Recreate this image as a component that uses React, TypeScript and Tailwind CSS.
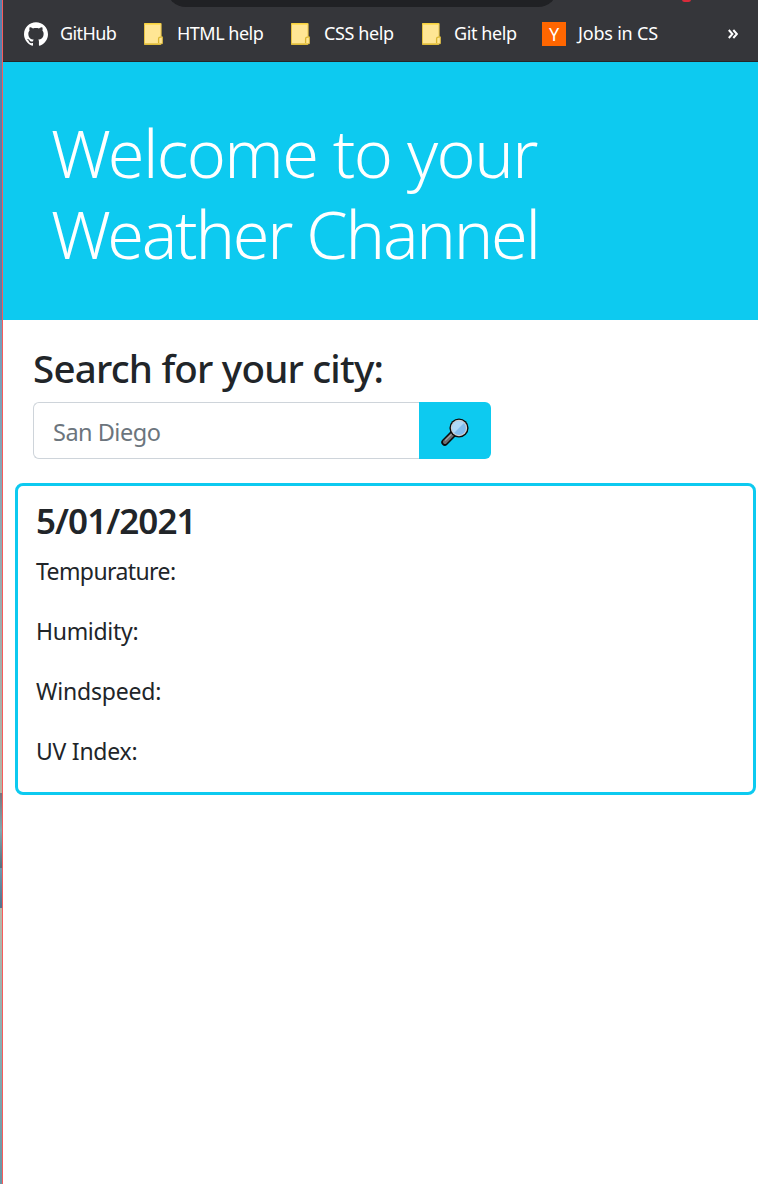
import type { ReactNode } from "react";
import { SiGithub } from "react-icons/si";

function NoteIcon() {
  return (
    <svg width="19" height="22" viewBox="0 0 19 22" className="block shrink-0">
      <path d="M.5.5h16.6v13.3h1.2v6.9h-1.6v.8H.5z" fill="#ffe694" stroke="#e5c241" />
      <path d="M.5 1h16" stroke="#ffd93f" strokeWidth="1.4" />
      <path d="M14.6 20v-4.2q0-1.7 1.8-1.7h1.2" fill="none" stroke="#d9b52f" strokeWidth="1.3" />
      <path d="M.5 20.9h16" stroke="#d9b52f" />
    </svg>
  );
}

function YIcon() {
  return (
    <div className="flex h-6 w-6 items-center justify-center bg-[#ff6600] text-[18px] leading-6 text-white">Y</div>
  );
}

function Magnifier() {
  return (
    <svg width="28" height="28" viewBox="0 0 28 28" className="block">
      <path d="M12.2 15.8 3.8 24.2" stroke="#0b0b0b" strokeWidth="7" strokeLinecap="round" />
      <path d="M11.8 16.2 4 24" stroke="#6c6c6e" strokeWidth="4" strokeLinecap="round" />
      <path d="M11.2 15.6 4.6 22.2" stroke="#a3a3a5" strokeWidth="1.2" strokeLinecap="round" />
      <circle cx="18" cy="10" r="9.6" fill="#0b0b0b" />
      <circle cx="18" cy="10" r="8.2" fill="#d0d0d2" />
      <circle cx="18" cy="10" r="7" fill="#83bdee" />
      <path d="M13.05 14.95A7 7 0 0 1 22.95 5.05z" fill="#afd9f8" />
    </svg>
  );
}

function Bookmark({ icon, label, className }: { icon: ReactNode; label: string; className: string }) {
  return (
    <a className={`flex shrink-0 items-center whitespace-nowrap ${className}`}>
      {icon}
      <span>{label}</span>
    </a>
  );
}

const readings = [
  { label: "Tempurature:", tracking: "tracking-[-0.6px]" },
  { label: "Humidity:", tracking: "tracking-[-0.3px]" },
  { label: "Windspeed:", tracking: "tracking-[-0.2px]" },
  { label: "UV Index:", tracking: "tracking-[-0.25px]" },
];

export default function App() {
  return (
    <div className="flex h-[1184px] w-[758px] overflow-hidden bg-white font-['Noto_Sans','Open_Sans',sans-serif] text-[#212529]">
      <div className="flex w-[2px] shrink-0 flex-col">
        <div className="h-[320px] bg-[#5681ab]" />
        <div className="h-[473px] bg-linear-to-b from-[#6f9fbe] to-[#b5b5a5]" />
        <div className="h-[75px] bg-linear-to-b from-[#77777f] via-[#7fa9b1] to-[#55707f]" />
        <div className="h-[40px] bg-linear-to-b from-[#6c9bb0] to-[#52738c]" />
        <div className="flex-1 bg-linear-to-b from-[#b8b8a8] via-[#84b0b5] to-[#6795a5]" />
      </div>
      <div className="w-px shrink-0 bg-[#f85b5b]" />
      <div className="min-w-0 flex-1">
        <nav className="relative flex h-[62px] items-center overflow-hidden border-b border-[#242629] bg-[#35363a] pt-[6px] text-[18px] text-white">
          <div className="absolute -top-[34px] left-[163px] h-[41px] w-[392px] rounded-[20px] bg-[#202124]" />
          <div className="absolute -top-[3px] left-[679px] h-[5px] w-[9px] rounded-full bg-[#d92b3a]" />
          <Bookmark className="ml-[21px] w-[120px] gap-3 tracking-[-0.6px]" icon={<SiGithub size={24} />} label="GitHub" />
          <Bookmark className="w-[147px] gap-[14px] tracking-[-0.5px]" icon={<NoteIcon />} label="HTML help" />
          <Bookmark className="w-[131px] gap-[14px] tracking-[-0.4px]" icon={<NoteIcon />} label="CSS help" />
          <Bookmark className="w-[120px] gap-[13px] tracking-[-0.4px]" icon={<NoteIcon />} label="Git help" />
          <Bookmark className="gap-3 tracking-[-0.2px]" icon={<YIcon />} label="Jobs in CS" />
          <svg width="10" height="10" viewBox="0 0 10 10" className="mr-5 ml-auto block">
            <path d="m.8 1 3.6 4L.8 9M5.3 1l3.6 4-3.6 4" fill="none" stroke="#fff" strokeWidth="2" />
          </svg>
        </nav>

        <header className="h-[258px] bg-[#0dcaf0] px-12 pt-[50px]">
          <h1 className="text-[66.5px] leading-[81px] font-light text-white">
            <span className="block tracking-[-1.65px]">Welcome to your</span>
            <span className="block tracking-[-2.25px]">Weather Channel</span>
          </h1>
        </header>

        <main className="pl-3">
          <form className="pt-6 pl-[18px]">
            <h2 className="h-[58px] text-[38.5px] leading-[48px] font-medium tracking-[-0.78px] whitespace-nowrap">Search for your city:</h2>
            <div className="flex h-[57px] w-[458px]">
              <input
                placeholder="San Diego"
                className="h-full w-[386px] rounded-l-[6px] border border-r-0 border-[#ced4da] bg-white pt-[3px] pl-[19px] text-[23.5px] tracking-[-0.5px] outline-none placeholder:text-[#6c757d]"
              />
              <button type="button" className="flex w-[72px] items-center justify-center rounded-r-[6px] bg-[#0dcaf0] pt-[3px]">
                <Magnifier />
              </button>
            </div>
          </form>

          <section className="mt-6 h-[312px] w-[741px] rounded-[8px] border-[3px] border-[#0dcaf0] pt-[13px] pl-[18px]">
            <h3 className="h-[54px] text-[35px] leading-[43px] font-semibold tracking-[-0.95px] whitespace-nowrap">5/01/2021</h3>
            <div className="flex flex-col gap-6">
              {readings.map(({ label, tracking }) => (
                <p key={label} className={`text-[23px] leading-9 ${tracking}`}>{label}</p>
              ))}
            </div>
          </section>
        </main>
      </div>
    </div>
  );
}
